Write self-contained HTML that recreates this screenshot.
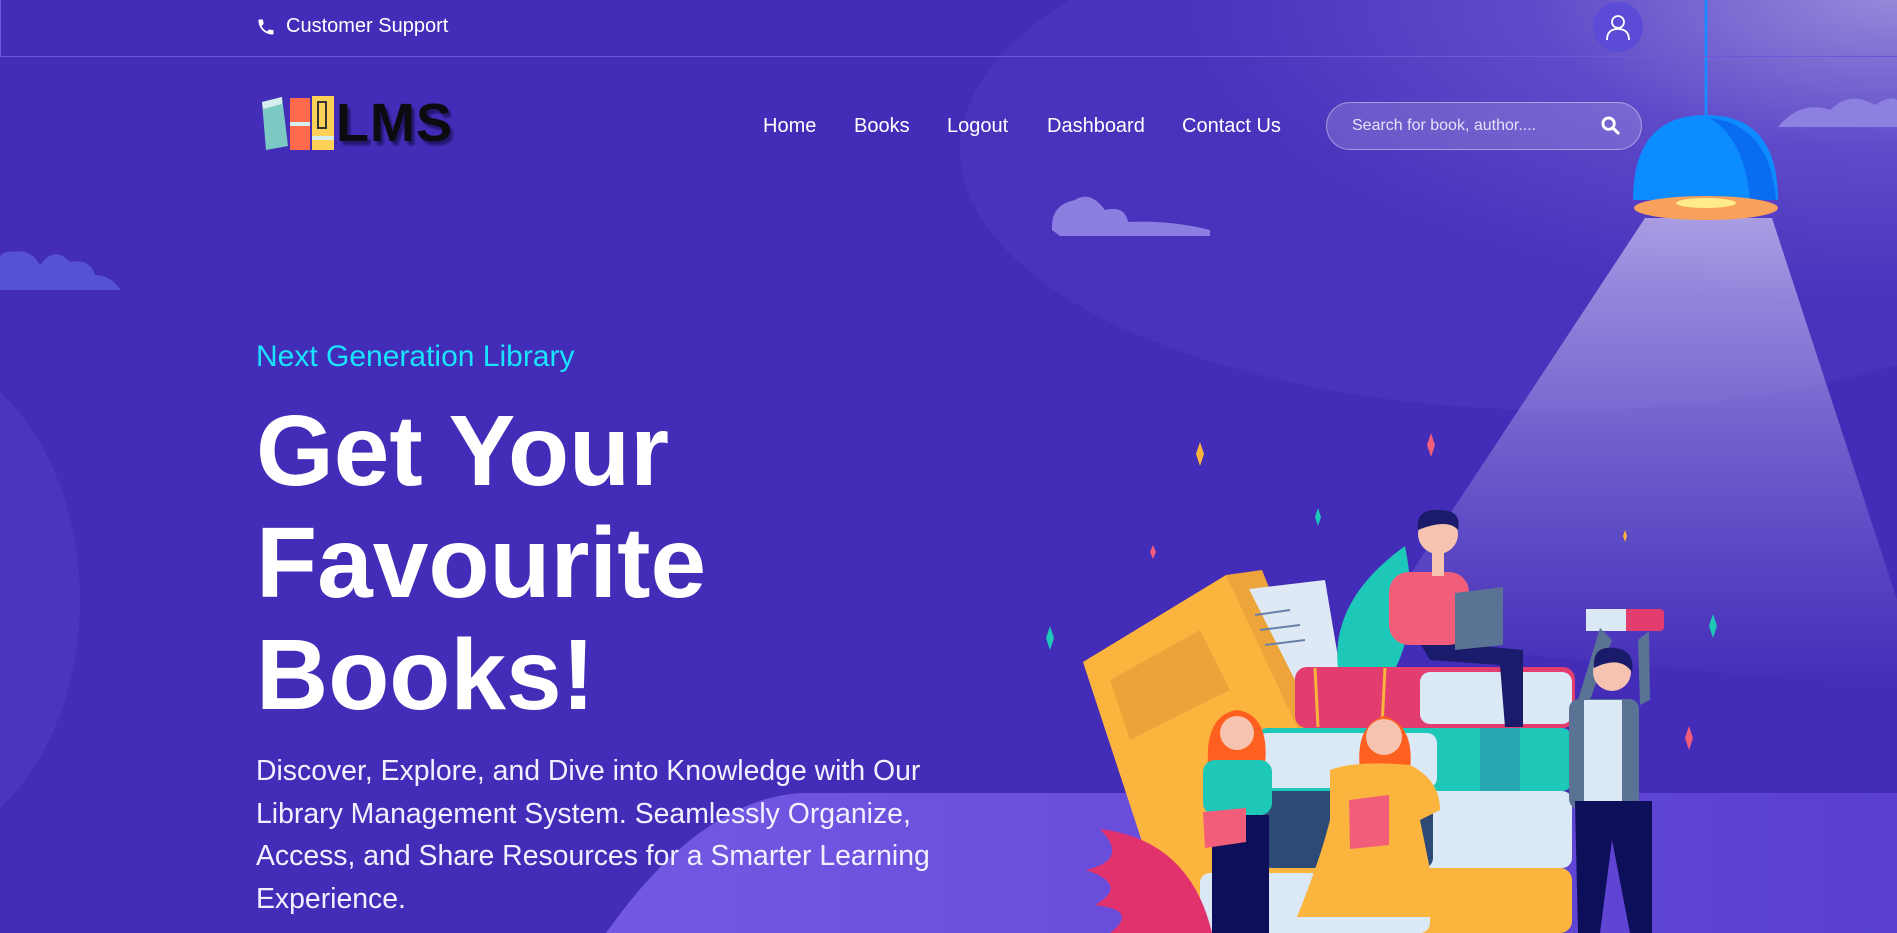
<!DOCTYPE html>
<html><head><meta charset="utf-8"><style>
*{margin:0;padding:0;box-sizing:border-box}
html,body{width:1897px;height:933px;overflow:hidden}
body{background:#432db8;font-family:"Liberation Sans",Arial,sans-serif;position:relative;color:#fff}
.abs{position:absolute}
.top{left:0;top:0;width:1897px;height:57px;border-bottom:1px solid #6b5ad8;border-left:1px solid #6b5ad8}
.cs{left:256px;top:15px;font-size:20px;display:flex;align-items:center;gap:10px}
.nav a{position:absolute;top:115px;font-size:20px;color:#fff;text-decoration:none}
.search{left:1326px;top:102px;width:316px;height:48px;border-radius:24px;background:rgba(255,255,255,.16);border:1px solid rgba(255,255,255,.4);font-size:16px;color:#e6e2fa;padding:14px 0 0 25px}
.ng{left:256px;top:340px;font-size:30px;color:#19e3ff}
.h1{left:256px;top:395px;font-size:100px;font-weight:bold;line-height:112px}
.p{left:256px;top:750px;font-size:28.4px;line-height:42.5px;color:#f2f0ff;white-space:nowrap}
</style></head><body>
<svg class="abs" style="left:0;top:0" width="1897" height="933">
<defs>
<radialGradient id="g1" cx="0.78" cy="0.2" r="0.6">
<stop offset="0" stop-color="#a79ae0"/><stop offset="0.5" stop-color="#6450cc"/><stop offset="1" stop-color="#4a33bd"/></radialGradient>
<linearGradient id="beam" x1="0" y1="0" x2="0" y2="1"><stop offset="0" stop-color="#d8d0f5" stop-opacity=".65"/><stop offset="1" stop-color="#b8aaf0" stop-opacity="0"/></linearGradient>
<linearGradient id="fl" x1="0" y1="0" x2="1" y2="0"><stop offset="0" stop-color="#7258e3"/><stop offset="1" stop-color="#5a3fcf"/></linearGradient>
</defs>
<ellipse cx="1560" cy="150" rx="600" ry="260" fill="url(#g1)" opacity=".85"/>
<ellipse cx="-100" cy="600" rx="180" ry="250" fill="#4c34c0"/>
<path d="M1645 218 L1772 218 L1897 600 L1897 690 L1367 640 Z" fill="url(#beam)"/>
<path d="M606 933 Q700 800 800 793 L1897 793 L1897 933 Z" fill="url(#fl)"/>
<path d="M0 290 L121 290 Q110 275 95 275 Q90 258 70 262 Q55 245 40 265 Q30 248 15 252 Q5 250 0 256Z" fill="#5552d6"/>
<path d="M1052 230 Q1050 205 1075 200 Q1090 190 1105 210 Q1125 205 1128 222 Q1170 220 1210 230 L1210 236 L1060 236 Z" fill="#8a7fe0"/>
<path d="M1778 127 Q1800 100 1830 110 Q1850 90 1875 105 Q1890 95 1897 100 L1897 127Z" fill="#8c80e0"/>
<line x1="1706" y1="0" x2="1706" y2="120" stroke="#1e88ff" stroke-width="3"/>
<path d="M1633 200 Q1633 115 1706 115 Q1778 115 1778 200 Z" fill="#0d8cff"/>
<path d="M1710 118 Q1770 125 1776 200 L1750 200 Q1745 140 1710 118Z" fill="#0a6cf0"/>
<ellipse cx="1706" cy="208" rx="72" ry="12" fill="#f7a15c"/>
<ellipse cx="1706" cy="203" rx="30" ry="5" fill="#ffeb8a"/>
<polygon points="1226,575 1262,570 1330,740 1250,740" fill="#eda43a"/>
<polygon points="1249,589 1325,580 1340,669 1295,680" fill="#dfe9f5"/>
<g stroke="#6a7fa8" stroke-width="2"><line x1="1255" y1="615" x2="1290" y2="610"/><line x1="1260" y1="630" x2="1300" y2="625"/><line x1="1265" y1="645" x2="1305" y2="640"/></g>
<path d="M1338 669 Q1330 600 1405 546 Q1420 620 1395 669Z" fill="#1ec8b8"/>
<polygon points="1083,662 1226,575 1297,727 1217,933 1172,933" fill="#fbb53f"/>
<polygon points="1110,680 1200,630 1230,690 1130,740" fill="#eea23a"/>
<rect x="1200" y="868" width="372" height="65" rx="12" fill="#fbb53f"/><rect x="1200" y="873" width="230" height="60" rx="10" fill="#dbe8f5"/>
<rect x="1263" y="791" width="309" height="77" rx="10" fill="#dbe8f5"/><rect x="1263" y="791" width="170" height="77" rx="10" fill="#2c4a75"/>
<rect x="1257" y="728" width="315" height="63" rx="10" fill="#1ec8b8"/><rect x="1257" y="733" width="180" height="55" rx="10" fill="#dbe8f5"/><rect x="1480" y="728" width="40" height="63" fill="#27a8b0"/>
<rect x="1295" y="667" width="280" height="61" rx="12" fill="#e23d6e"/><rect x="1420" y="672" width="152" height="52" rx="10" fill="#dbe8f5"/>
<line x1="1315" y1="668" x2="1318" y2="727" stroke="#f9b43c" stroke-width="3"/><line x1="1385" y1="668" x2="1382" y2="727" stroke="#f9b43c" stroke-width="3"/>
<path d="M1418 640 L1523 650 L1523 727 L1505 727 L1500 665 L1430 660Z" fill="#1a1b6b"/>
<rect x="1389" y="572" width="80" height="73" rx="20" fill="#f25d7a"/>
<rect x="1432" y="548" width="12" height="28" fill="#f6c3b0"/>
<circle cx="1438" cy="534" r="20" fill="#f6c3b0"/><path d="M1418 530 Q1415 508 1440 510 Q1462 510 1458 530 Q1448 518 1418 530Z" fill="#1a1b6b"/>
<polygon points="1455,593 1503,587 1503,645 1455,650" fill="#5a7394"/>
<rect x="1586" y="609" width="78" height="22" rx="4" fill="#e23d6e"/><rect x="1586" y="609" width="40" height="22" fill="#dbe8f5"/>
<path d="M1600 628 L1578 700 L1588 705 L1612 640Z" fill="#5a7394"/><path d="M1649 631 L1650 700 L1640 705 L1638 640Z" fill="#5a7394"/>
<rect x="1569" y="699" width="70" height="110" rx="10" fill="#5a7394"/><rect x="1584" y="700" width="38" height="105" fill="#dbe8f5"/>
<path d="M1575 801 L1652 801 L1652 933 L1630 933 L1612 840 L1600 933 L1578 933Z" fill="#0e0f5a"/>
<circle cx="1612" cy="672" r="19" fill="#f6c3b0"/><path d="M1594 668 Q1592 645 1615 648 Q1635 650 1632 672 Q1620 655 1594 668Z" fill="#1a1b6b"/>
<path d="M1384 716 Q1355 725 1360 770 L1410 770 Q1415 725 1384 716Z" fill="#ff5f1f"/>
<path d="M1330 770 Q1355 760 1410 765 Q1440 780 1440 810 L1420 820 Q1430 870 1440 917 L1297 917 Q1320 860 1330 820Z" fill="#fbb53f"/>
<circle cx="1384" cy="737" r="18" fill="#f6c3b0"/>
<polygon points="1349,800 1389,795 1389,845 1350,849" fill="#f25d7a"/>
<path d="M1237 710 Q1205 715 1208 765 L1265 765 Q1270 715 1237 710Z" fill="#ff5f1f"/>
<rect x="1203" y="760" width="69" height="55" rx="12" fill="#1ec8b8"/>
<rect x="1212" y="815" width="57" height="118" fill="#0e0f5a"/>
<circle cx="1237" cy="733" r="17" fill="#f6c3b0"/>
<polygon points="1203,812 1246,808 1246,842 1205,848" fill="#f25d7a"/>
<path d="M1212 933 Q1190 840 1100 829 Q1130 860 1086 870 Q1130 885 1095 905 Q1140 910 1110 933Z" fill="#e2326e"/>
<g>
<path d="M1200 442 L1204 454 L1200 466 L1196 454Z" fill="#fbb53f"/>
<path d="M1431 433 L1435 445 L1431 457 L1427 445Z" fill="#f25d7a"/>
<path d="M1318 508 L1321 517 L1318 526 L1315 517Z" fill="#1ec8b8"/>
<path d="M1153 545 L1156 552 L1153 559 L1150 552Z" fill="#f25d7a"/>
<path d="M1625 530 L1627 536 L1625 542 L1623 536Z" fill="#fbb53f"/>
<path d="M1050 626 L1054 638 L1050 650 L1046 638Z" fill="#1ec8b8"/>
<path d="M1713 614 L1717 626 L1713 638 L1709 626Z" fill="#1ec8b8"/>
<path d="M1689 726 L1693 738 L1689 750 L1685 738Z" fill="#f25d7a"/>
</g>
</svg>
<div class="abs top"></div>
<div class="abs cs"><svg width="20" height="20" viewBox="0 0 24 24"><path d="M6.6 10.8c1.4 2.8 3.8 5.1 6.6 6.6l2.2-2.2c.3-.3.7-.4 1-.2 1.1.4 2.3.6 3.6.6.6 0 1 .4 1 1V20c0 .6-.4 1-1 1C10.6 21 3 13.4 3 4c0-.6.4-1 1-1h3.5c.6 0 1 .4 1 1 0 1.3.2 2.5.6 3.6.1.3 0 .7-.2 1z" fill="#fff"/></svg>Customer Support</div>
<div class="abs" style="left:1593px;top:2px;width:50px;height:50px;border-radius:50%;background:#5b4bd6"></div>
<svg class="abs" style="left:1605px;top:13px" width="26" height="28" viewBox="0 0 26 28"><circle cx="13" cy="9" r="6" fill="none" stroke="#fff" stroke-width="1.8"/><path d="M2 27 Q2 16 13 16 Q24 16 24 27" fill="none" stroke="#fff" stroke-width="1.8"/></svg>
<svg class="abs" style="left:258px;top:92px" width="90" height="62">
<polygon points="4,10 24,5 30,54 8,58" fill="#7cc8c4"/><polygon points="4,10 24,5 24,12 5,17" fill="#d6eeee"/>
<rect x="32" y="6" width="20" height="52" fill="#ff6a4b"/><rect x="32" y="30" width="20" height="4" fill="#d6eeee"/>
<rect x="54" y="4" width="22" height="54" fill="#ffd257"/><rect x="60" y="10" width="8" height="26" fill="none" stroke="#333" stroke-width="2"/><rect x="54" y="44" width="22" height="4" fill="#d6eeee"/>
</svg>
<div class="abs" style="left:336px;top:92px;font-size:54px;font-weight:900;color:#0b0b10;letter-spacing:1px;text-shadow:3px 4px 2px rgba(20,15,80,.7)">LMS</div>
<div class="nav"><a style="left:763px">Home</a><a style="left:854px">Books</a><a style="left:947px">Logout</a><a style="left:1047px">Dashboard</a><a style="left:1182px">Contact Us</a></div>
<div class="abs search">Search for book, author....</div>
<svg class="abs" style="left:1601px;top:116px" width="19" height="19" viewBox="0 0 20 20"><circle cx="8" cy="8" r="6" fill="none" stroke="#fff" stroke-width="3"/><line x1="12.5" y1="12.5" x2="18" y2="18" stroke="#fff" stroke-width="3.2" stroke-linecap="round"/></svg>
<div class="abs ng">Next Generation Library</div>
<div class="abs h1">Get Your<br>Favourite<br>Books!</div>
<div class="abs p">Discover, Explore, and Dive into Knowledge with Our<br>Library Management System. Seamlessly Organize,<br>Access, and Share Resources for a Smarter Learning<br>Experience.</div>
</body></html>
